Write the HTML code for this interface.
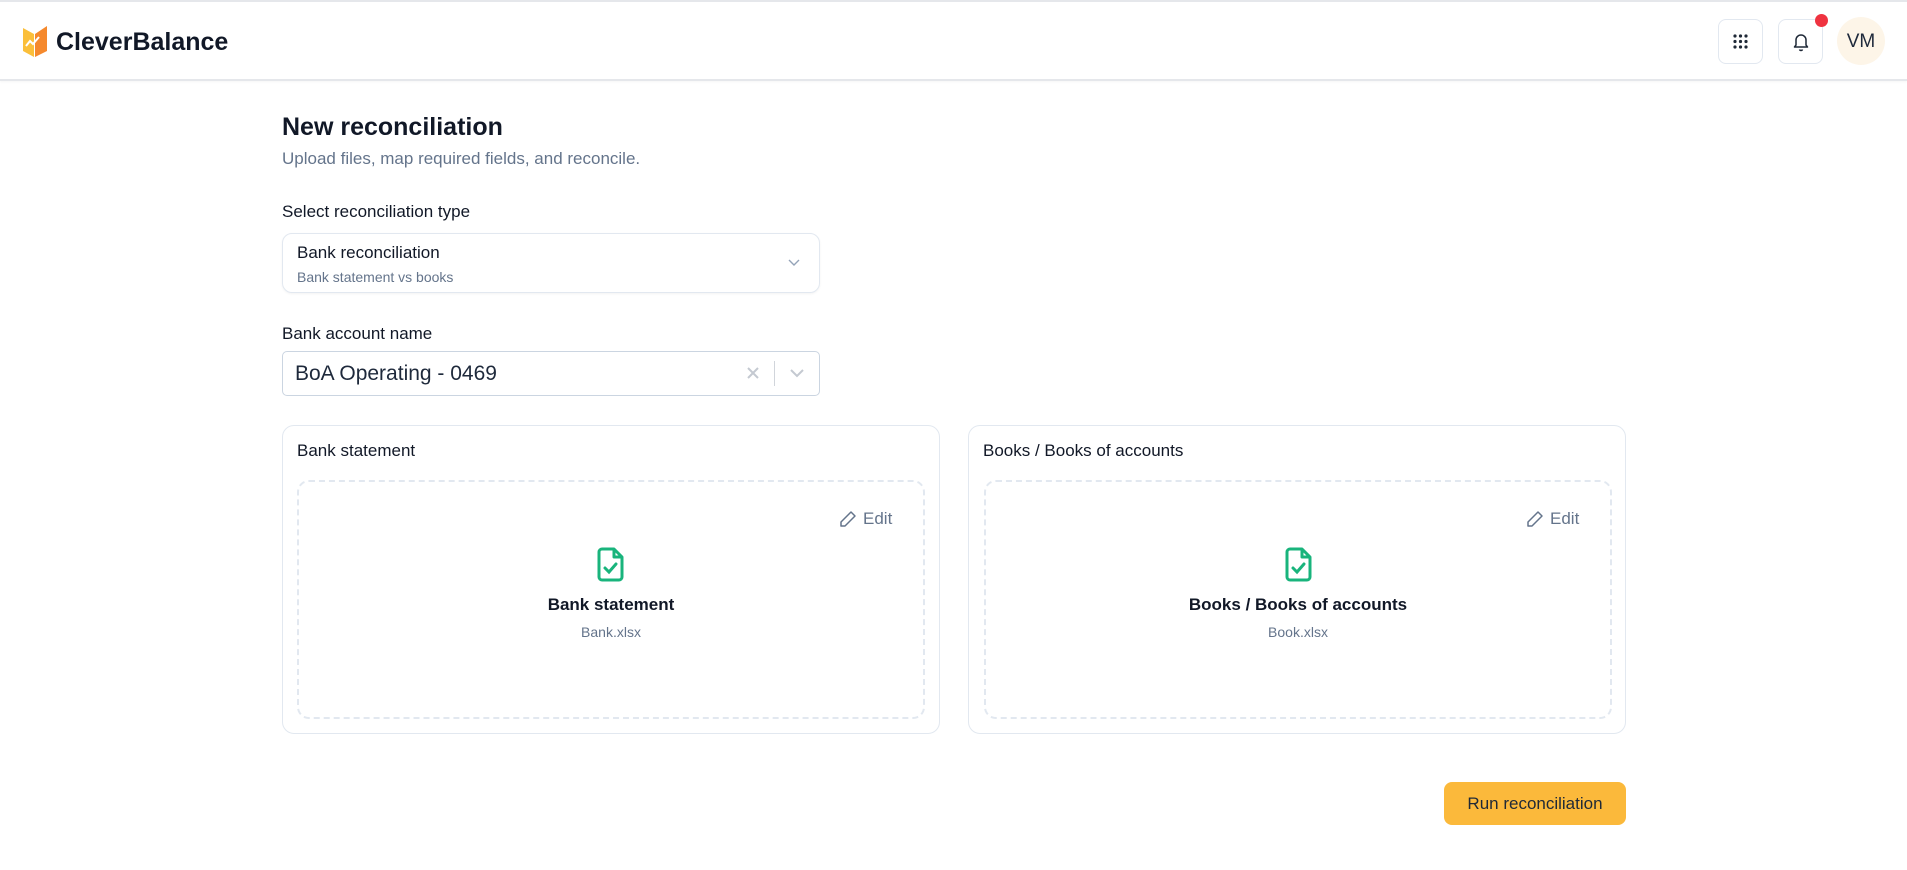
<!DOCTYPE html>
<html><head><meta charset="utf-8"><style>
*{box-sizing:border-box;margin:0;padding:0}
body{width:1907px;height:870px;background:#fff;font-family:"Liberation Sans",sans-serif;color:#0f172a;position:relative;overflow:hidden}
.a{position:absolute}
.hdr{left:0;top:0;width:1907px;height:81px;border-top:2px solid #e5e7eb;border-bottom:2px solid #e5e7eb;box-shadow:0 1px 2px rgba(0,0,0,.04)}
.btn{width:45px;height:45px;border:1px solid #e2e8f0;border-radius:8px;background:#fff}
.card{border:1px solid #e2e8f0;border-radius:12px;background:#fff}
.dash{border:2px dashed #e2e8f0;border-radius:12px}
</style></head><body>
<div class="a hdr"></div>
<svg class="a" style="left:22px;top:25px" width="26" height="33" viewBox="0 0 26 33">
<path d="M1 3 L12 9 L12 32 L1 26 Z" fill="#fbbf3a"/>
<path d="M13 9 L25 1 L25 26 L13 32 Z" fill="#f5892d"/>
<path d="M4 21 L8 16 L11 19 L17 12" stroke="#fff" stroke-width="2" fill="none"/>
</svg>
<div class="a" style="left:56px;top:28px;font-size:25px;font-weight:700;color:#111827">CleverBalance</div>
<div class="a btn" style="left:1718px;top:19px"></div>
<svg class="a" style="left:1733px;top:34px" width="15" height="15"><g fill="#1f2937"><circle cx="2" cy="2" r="1.6"/><circle cx="7.5" cy="2" r="1.6"/><circle cx="13" cy="2" r="1.6"/><circle cx="2" cy="7.5" r="1.6"/><circle cx="7.5" cy="7.5" r="1.6"/><circle cx="13" cy="7.5" r="1.6"/><circle cx="2" cy="13" r="1.6"/><circle cx="7.5" cy="13" r="1.6"/><circle cx="13" cy="13" r="1.6"/></g></svg>
<div class="a btn" style="left:1778px;top:19px"></div>
<svg class="a" style="left:1791px;top:31px" width="20" height="22" viewBox="0 0 20 22"><path d="M5 14 V9 a5 5 0 0 1 10 0 V14 L16.5 16 H3.5 Z" fill="none" stroke="#1f2937" stroke-width="1.5" stroke-linejoin="round"/><path d="M8.5 18.5 a1.6 1.6 0 0 0 3 0" fill="none" stroke="#1f2937" stroke-width="1.5"/></svg>
<div class="a" style="left:1815px;top:14px;width:13px;height:13px;border-radius:50%;background:#ef3340"></div>
<div class="a" style="left:1837px;top:17px;width:48px;height:48px;border-radius:50%;background:#fdf5e8;font-size:19px;line-height:50px;text-align:center;color:#1e293b">VM</div>

<div class="a" style="left:282px;top:113px;font-size:25px;font-weight:700;color:#111827">New reconciliation</div>
<div class="a" style="left:282px;top:149px;font-size:17px;color:#64748b">Upload files, map required fields, and reconcile.</div>
<div class="a" style="left:282px;top:202px;font-size:17px;color:#111827">Select reconciliation type</div>
<div class="a" style="left:282px;top:233px;width:538px;height:60px;border:1px solid #e2e8f0;border-radius:10px;box-shadow:0 1px 2px rgba(0,0,0,.05)"></div>
<div class="a" style="left:297px;top:243px;font-size:17px;font-weight:500;color:#111827">Bank reconciliation</div>
<div class="a" style="left:297px;top:269px;font-size:14px;color:#64748b">Bank statement vs books</div>
<svg class="a" style="left:787px;top:258px" width="14" height="10"><path d="M2 2 L7 7 L12 2" stroke="#94a3b8" stroke-width="1.4" fill="none"/></svg>
<div class="a" style="left:282px;top:324px;font-size:17px;color:#111827">Bank account name</div>
<div class="a" style="left:282px;top:351px;width:538px;height:45px;border:1px solid #cbd5e1;border-radius:5px"></div>
<div class="a" style="left:295px;top:362px;font-size:21px;color:#1e293b">BoA Operating - 0469</div>
<svg class="a" style="left:746px;top:366px" width="14" height="14"><path d="M2 2 L12 12 M12 2 L2 12" stroke="#c4c9d1" stroke-width="2"/></svg>
<div class="a" style="left:774px;top:361px;width:1px;height:25px;background:#d1d5db"></div>
<svg class="a" style="left:789px;top:368px" width="16" height="10"><path d="M2 2 L8 8 L14 2" stroke="#c4c9d1" stroke-width="2" fill="none"/></svg>

<div class="a card" style="left:282px;top:425px;width:658px;height:309px"></div>
<div class="a" style="left:297px;top:441px;font-size:17px;color:#111827">Bank statement</div>
<div class="a dash" style="left:297px;top:480px;width:628px;height:239px"></div>
<div class="a card" style="left:968px;top:425px;width:658px;height:309px"></div>
<div class="a" style="left:983px;top:441px;font-size:17px;color:#111827">Books / Books of accounts</div>
<div class="a dash" style="left:984px;top:480px;width:628px;height:239px"></div>

<svg class="a" style="left:839px;top:510px" width="18" height="18" viewBox="0 0 18 18"><path d="M12 2 L16 6 L6 16 L2 16 L2 12 Z" fill="none" stroke="#64748b" stroke-width="1.5" stroke-linejoin="round"/></svg>
<div class="a" style="left:863px;top:509px;font-size:17px;color:#64748b">Edit</div>
<svg class="a" style="left:595px;top:546px" width="30" height="38" viewBox="0 0 30 38"><path d="M7 3 H19 L27 11 V31 a3 3 0 0 1 -3 3 H7 a3 3 0 0 1 -3 -3 V6 a3 3 0 0 1 3 -3 Z M19 3 V11 H27" fill="none" stroke="#19b47c" stroke-width="3" stroke-linejoin="round"/><path d="M10 22 L14 26 L21 18" fill="none" stroke="#19b47c" stroke-width="3" stroke-linecap="round"/></svg>
<div class="a" style="left:297px;top:595px;width:628px;text-align:center;font-size:17px;font-weight:700;color:#111827">Bank statement</div>
<div class="a" style="left:297px;top:624px;width:628px;text-align:center;font-size:14px;color:#64748b">Bank.xlsx</div>

<svg class="a" style="left:1526px;top:510px" width="18" height="18" viewBox="0 0 18 18"><path d="M12 2 L16 6 L6 16 L2 16 L2 12 Z" fill="none" stroke="#64748b" stroke-width="1.5" stroke-linejoin="round"/></svg>
<div class="a" style="left:1550px;top:509px;font-size:17px;color:#64748b">Edit</div>
<svg class="a" style="left:1283px;top:546px" width="30" height="38" viewBox="0 0 30 38"><path d="M7 3 H19 L27 11 V31 a3 3 0 0 1 -3 3 H7 a3 3 0 0 1 -3 -3 V6 a3 3 0 0 1 3 -3 Z M19 3 V11 H27" fill="none" stroke="#19b47c" stroke-width="3" stroke-linejoin="round"/><path d="M10 22 L14 26 L21 18" fill="none" stroke="#19b47c" stroke-width="3" stroke-linecap="round"/></svg>
<div class="a" style="left:984px;top:595px;width:628px;text-align:center;font-size:17px;font-weight:700;color:#111827">Books / Books of accounts</div>
<div class="a" style="left:984px;top:624px;width:628px;text-align:center;font-size:14px;color:#64748b">Book.xlsx</div>

<div class="a" style="left:1444px;top:782px;width:182px;height:43px;border-radius:8px;background:#fbb93b;font-size:17px;font-weight:500;line-height:43px;text-align:center;color:#1f2937">Run reconciliation</div>
</body></html>
